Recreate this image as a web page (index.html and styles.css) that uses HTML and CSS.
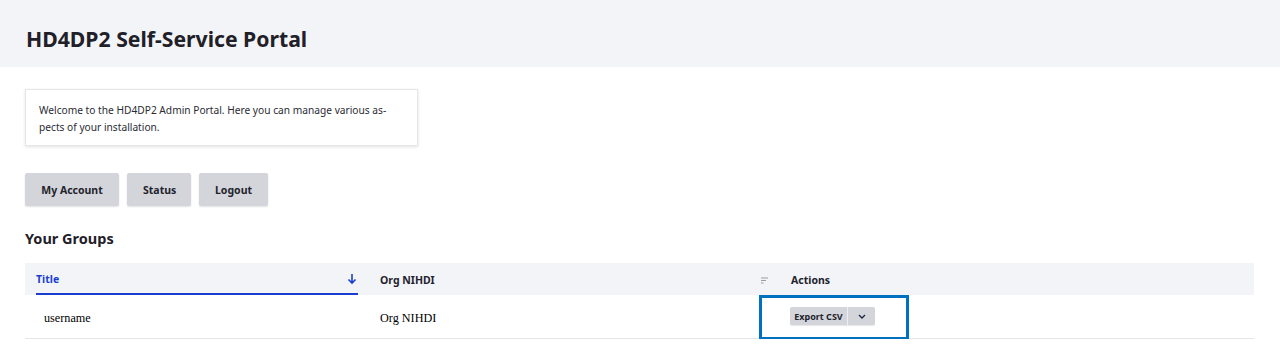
FILE: index.html
```html
<!DOCTYPE html>
<html>
<head>
<meta charset="utf-8">
<link rel="stylesheet" href="styles.css">
</head>
<body>
<header class="topbar"><h1 class="title">HD4DP2 Self-Service Portal</h1></header>
<main class="main">
  <div class="welcome">Welcome to the HD4DP2 Admin Portal. Here you can manage various as-<br>pects of your installation.</div>
  <div class="btns">
    <button class="btn">My Account</button>
    <button class="btn">Status</button>
    <button class="btn">Logout</button>
  </div>
  <h2 class="groups">Your Groups</h2>
  <table class="tbl">
    <colgroup><col class="c1"><col class="c2"><col class="c3"></colgroup>
    <thead>
      <tr>
        <th class="th-active"><div class="thin"><span>Title</span><svg class="arrow" width="10" height="12" viewBox="0 0 10 12"><path d="M5 1v9M1.5 6.5L5 10l3.5-3.5" fill="none" stroke="#1a3fd0" stroke-width="1.6"/></svg></div></th>
        <th><div class="thin"><span>Org NIHDI</span><svg class="sort" width="8" height="7" viewBox="0 0 8 7"><path d="M0 1h7M0 3.5h5M0 6h2.5" stroke="#9a9ca3" stroke-width="1"/></svg></div></th>
        <th><div class="thin"><span>Actions</span></div></th>
      </tr>
    </thead>
    <tbody>
      <tr>
        <td class="td-user">username</td>
        <td class="td-org">Org NIHDI</td>
        <td class="td-act">
          <div class="split"><span class="split-main">Export CSV</span><span class="split-drop"><svg width="8" height="5" viewBox="0 0 8 5"><path d="M1 1l3 3 3-3" fill="none" stroke="#1c2340" stroke-width="1.3"/></svg></span></div>
          <div class="highlight"></div>
        </td>
      </tr>
    </tbody>
  </table>
</main>
</body>
</html>
```
FILE: styles.css
```css
* { box-sizing: border-box; }
body { margin: 0; background: #fff; font-family: "Noto Sans", "Open Sans", sans-serif; color: #222330; }
.topbar { height: 67px; background: #f3f4f8; padding: 0 26px; display: flex; align-items: center; }
.title { margin: 0; font-size: 21.2px; font-weight: 700; color: #1f2028; padding-top: 10px; }
.main { padding: 22px 25px 0; }
.welcome { width: 393px; height: 57px; padding: 12px 13px; font-size: 10.2px; line-height: 17px; color: #2a2b33; background: #fff; border: 1px solid #e6e7ea; box-shadow: 0 1px 3px rgba(0,0,0,0.12); }
.btns { display: flex; gap: 8px; margin-top: 27px; }
.btn { height: 33px; padding: 0 16px; border: none; border-radius: 2px; background: #d4d5da; font-family: inherit; font-size: 10.5px; font-weight: 700; color: #22232d; box-shadow: 0 1px 2px rgba(0,0,0,0.12); }
.btn:nth-child(1) { width: 94px; }
.btn:nth-child(2) { width: 64px; }
.btn:nth-child(3) { width: 69px; }
.groups { margin: 22px 0 0; font-size: 14.5px; font-weight: 700; line-height: 20px; color: #1f2028; }
.tbl { margin-top: 15px; width: 1229px; border-collapse: collapse; table-layout: fixed; }
.c1 { width: 344px; } .c2 { width: 411px; }
thead tr { background: #f3f4f8; }
th { height: 32px; padding: 0 11px; text-align: left; font-size: 10.5px; font-weight: 700; color: #22232d; }
.thin { display: flex; align-items: center; justify-content: space-between; height: 32px; padding-top: 2px; }
.th-active .thin { color: #1a3fd0; border-bottom: 2px solid #1a3fd0; }
.arrow { margin-right: 1px; }
.sort { margin-right: 0; }
tbody td { height: 43px; border-bottom: 1px solid #e4e5e8; font-family: "Liberation Serif", serif; font-size: 12.2px; color: #000; padding: 4px 11px 0; }
.td-user { padding-left: 19px; }
.td-act { position: relative; padding: 0 11px 0 10px; }
.split { display: inline-flex; height: 18px; background: #d4d5da; border-radius: 2px; box-shadow: 0 1px 1px rgba(0,0,0,0.1); font-family: "Noto Sans", sans-serif; font-size: 9px; font-weight: 700; color: #22232d; vertical-align: middle; }
.split-main { width: 58px; display: flex; align-items: center; justify-content: center; border-right: 1px solid #eceef1; }
.split-drop { width: 27px; display: flex; align-items: center; justify-content: center; }
.highlight { position: absolute; left: -21px; top: 0; width: 150px; height: 45px; border: 3px solid #0070c0; }
```
